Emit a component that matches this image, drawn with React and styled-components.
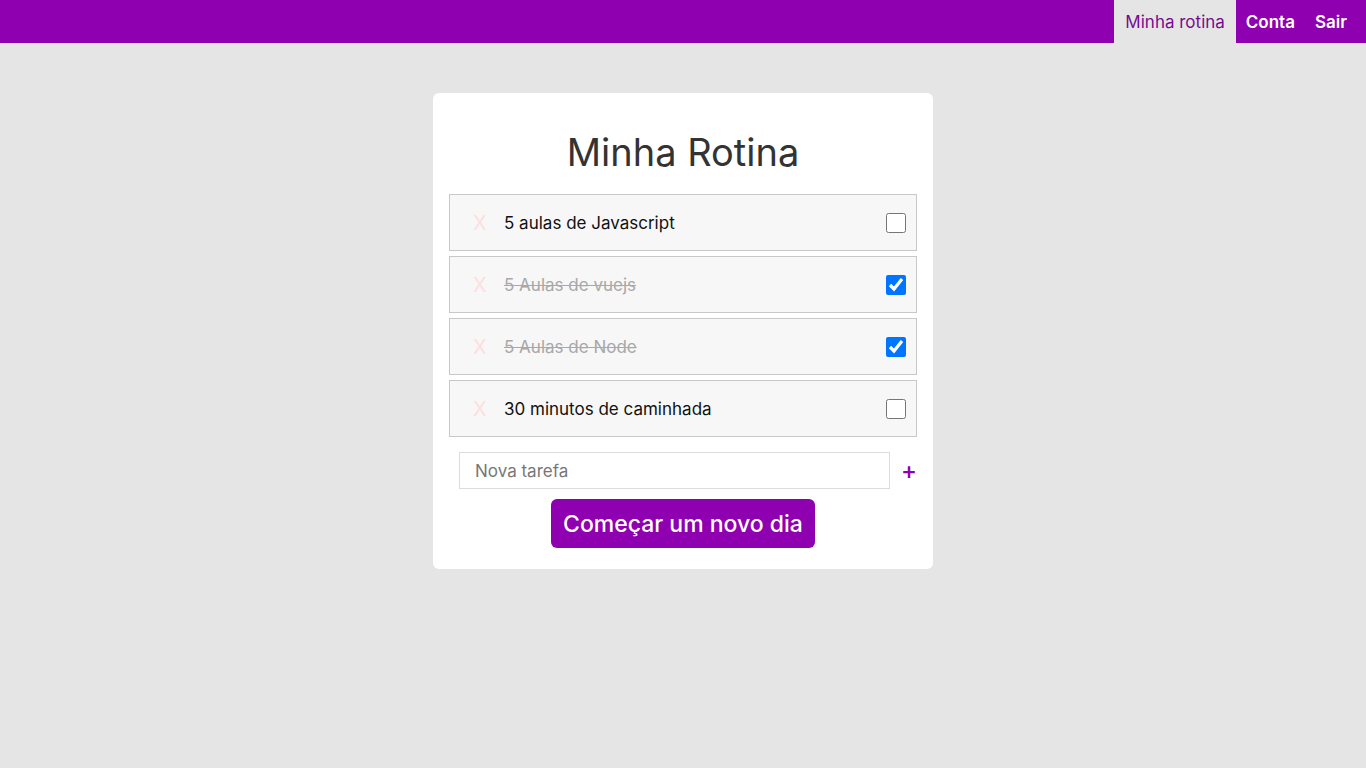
import styled, { createGlobalStyle } from 'styled-components';

const GlobalStyle = createGlobalStyle`
  * { box-sizing: border-box; }
  body {
    margin: 0;
    background: #e5e5e5;
    font-family: Inter, "Noto Sans", sans-serif;
  }
`;

const tasks = [
  { id: 1, text: '5 aulas de Javascript', done: false },
  { id: 2, text: '5 Aulas de vuejs', done: true },
  { id: 3, text: '5 Aulas de Node', done: true },
  { id: 4, text: '30 minutos de caminhada', done: false },
];

const App = () => {
  return (
    <>
      <GlobalStyle />
      <NavBar>
        <NavLink active>Minha rotina</NavLink>
        <NavLink bold>Conta</NavLink>
        <NavLink bold>Sair</NavLink>
      </NavBar>
      <Main>
        <Card>
          <Title>Minha Rotina</Title>
          <TaskList>
            {tasks.map((t) => (
              <TaskRow key={t.id}>
                <RemoveX>X</RemoveX>
                <TaskText done={t.done}>{t.text}</TaskText>
                <Check type="checkbox" defaultChecked={t.done} />
              </TaskRow>
            ))}
          </TaskList>
          <NewTaskRow>
            <NewTaskInput placeholder="Nova tarefa" />
            <AddButton>+</AddButton>
          </NewTaskRow>
          <NewDayButton>Começar um novo dia</NewDayButton>
        </Card>
      </Main>
    </>
  );
};

export default App;

const NavBar = styled.nav`
  height: 43px;
  background: #8e00b0;
  display: flex;
  justify-content: flex-end;
  padding-right: 9px;
`;
const NavLink = styled.a`
  display: flex;
  align-items: center;
  padding: 0 ${(props) => (props.active ? '11px' : '10px')};
  font-size: 17px;
  font-weight: ${(props) => (props.bold ? 600 : 400)};
  color: ${(props) => (props.active ? '#7a0a8f' : '#fff')};
  background: ${(props) => (props.active ? '#e5e5e5' : 'transparent')};
  cursor: pointer;
`;
const Main = styled.main`
  display: flex;
  justify-content: center;
  padding-top: 50px;
`;
const Card = styled.div`
  width: 500px;
  background: #fff;
  border-radius: 6px;
  padding: 16px 16px 21px;
  display: flex;
  flex-direction: column;
  align-items: center;
`;
const Title = styled.h1`
  margin: 21px 0 20px;
  font-size: 38px;
  font-weight: 400;
  line-height: 44px;
  color: #333;
`;
const TaskList = styled.div`
  width: 100%;
  display: flex;
  flex-direction: column;
  gap: 5px;
`;
const TaskRow = styled.div`
  height: 57px;
  display: flex;
  align-items: center;
  padding: 0 10px 0 23px;
  background: #f7f7f7;
  border: 1px solid #c8c8c8;
`;
const RemoveX = styled.span`
  width: 31px;
  font-size: 20px;
  color: #ffdede;
  cursor: pointer;
`;
const TaskText = styled.span`
  flex: 1;
  font-size: 17px;
  color: ${(props) => (props.done ? '#a8a8a8' : '#111')};
  text-decoration: ${(props) => (props.done ? 'line-through' : 'none')};
`;
const Check = styled.input`
  width: 20px;
  height: 20px;
  margin: 0;
`;
const NewTaskRow = styled.div`
  width: 100%;
  display: flex;
  align-items: center;
  margin-top: 15px;
  padding-left: 10px;
`;
const NewTaskInput = styled.input`
  flex: 1;
  height: 37px;
  border: 1px solid #dcdcdc;
  padding: 0 15px;
  font-family: inherit;
  font-size: 17px;
  outline: none;
  &::placeholder {
    color: #777;
  }
`;
const AddButton = styled.button`
  width: 27px;
  border: none;
  background: none;
  color: #8e00b0;
  font-size: 24px;
  font-weight: 500;
  font-family: inherit;
  padding: 0 0 0 11px;
  text-align: left;
  cursor: pointer;
`;
const NewDayButton = styled.button`
  margin-top: 10px;
  height: 49px;
  padding: 0 12px;
  background: #8e00b0;
  color: #fff;
  border: none;
  border-radius: 6px;
  font-family: inherit;
  font-size: 23px;
  font-weight: 500;
  cursor: pointer;
`;
